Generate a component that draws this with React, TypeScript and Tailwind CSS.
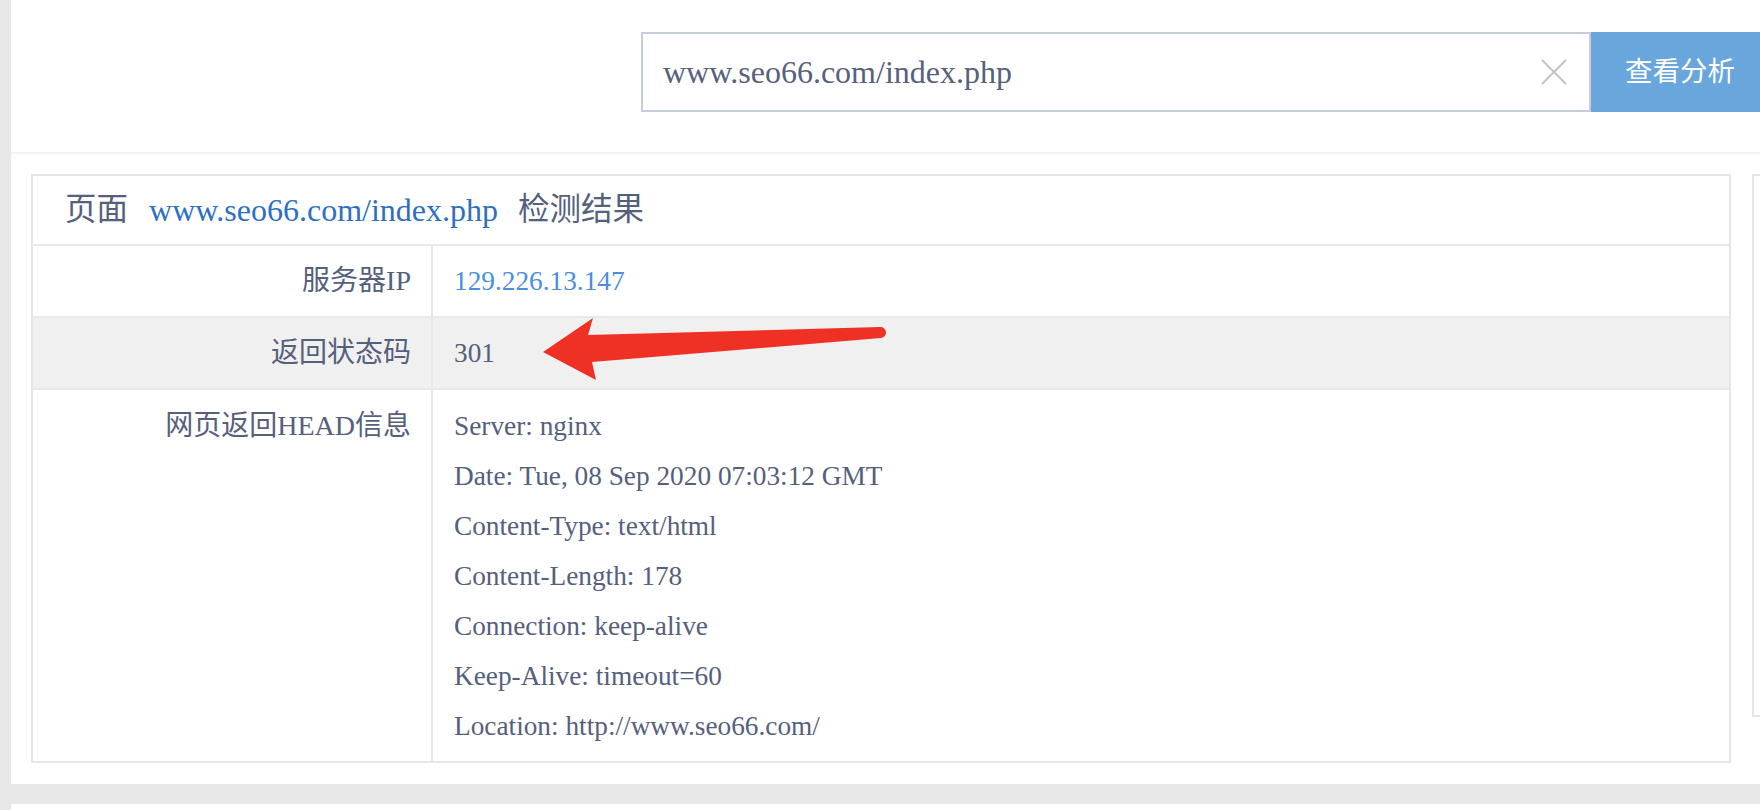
import React from "react";

const serif = { fontFamily: '"Liberation Serif", "Noto Sans CJK SC", serif' };

const headLines = [
  "Server: nginx",
  "Date: Tue, 08 Sep 2020 07:03:12 GMT",
  "Content-Type: text/html",
  "Content-Length: 178",
  "Connection: keep-alive",
  "Keep-Alive: timeout=60",
  "Location: http://www.seo66.com/",
];

function SearchBar() {
  return (
    <div className="flex h-[154px] items-start pt-[32px] pl-[630px] border-b-2 border-[#f2f2f2]">
      <div className="flex h-[80px] w-[950px] shrink-0 items-center border-2 border-[#c6ccda] bg-white pl-[20px] pr-[22px]">
        <span className="flex-1 text-[32px] text-[#56617c]">www.seo66.com/index.php</span>
        <svg width="26" height="26" viewBox="0 0 26 26" className="shrink-0">
          <path d="M1 1 L25 25 M25 1 L1 25" stroke="#c4c4c4" strokeWidth="2" />
        </svg>
      </div>
      <button className="flex h-[80px] w-[190px] shrink-0 items-center bg-[#68a6dc] pl-[34px] text-[27.5px] text-white">
        查看分析
      </button>
    </div>
  );
}

function Row({ label, grey, children }: { label: string; grey?: boolean; children: React.ReactNode }) {
  return (
    <div className={`flex border-b-2 border-[#e8e8e8] ${grey ? "bg-[#f0f0f0]" : ""}`}>
      <div className="flex w-[400px] shrink-0 items-center justify-end border-r-2 border-[#e8e8e8] pr-[20px] text-[28px]">
        {label}
      </div>
      <div className="flex h-[70px] flex-1 items-center pl-[21px] text-[27.3px]">{children}</div>
    </div>
  );
}

function ResultCard() {
  return (
    <div className="w-[1700px] shrink-0 border-2 border-[#e6e6e6] text-[#55607d]">
      <div className="flex h-[70px] items-center border-b-2 border-[#e8e8e8] pl-[32px] text-[31.5px]">
        <span>页面</span>
        <span className="ml-[21px] text-[32px] text-[#2d6fc2]">www.seo66.com/index.php</span>
        <span className="ml-[20px]">检测结果</span>
      </div>
      <Row label="服务器IP">
        <span className="text-[#4a8ee0]">129.226.13.147</span>
      </Row>
      <Row label="返回状态码" grey>
        301
      </Row>
      <div className="flex">
        <div className="w-[400px] shrink-0 border-r-2 border-[#e8e8e8] pr-[20px] pt-[11px] text-right text-[28px] leading-[50px]">
          网页返回HEAD信息
        </div>
        <div className="flex-1 pb-[10px] pl-[21px] pt-[11px] text-[27.3px] leading-[50px]">
          {headLines.map((l) => (
            <div key={l}>{l}</div>
          ))}
        </div>
      </div>
    </div>
  );
}

export default function App() {
  return (
    <div className="relative h-[810px] w-[1760px] overflow-hidden bg-[#e8e8e8] pl-[11px]" style={serif}>
      <div className="bg-white">
        <SearchBar />
        <div className="flex items-start gap-[21px] pl-[20px] pt-[20px] pb-[21px]">
          <ResultCard />
          <div className="h-[543px] w-[200px] shrink-0 border-2 border-[#e6e6e6]" />
        </div>
      </div>
      <div className="mt-[20px] h-[100px] bg-white" />

      <svg
        className="absolute left-[540px] top-[312px]"
        width="352"
        height="72"
        viewBox="0 0 352 72"
      >
        <path
          d="M3 40 L53 6 L48 23 L340 15 A5.5 5.5 0 0 1 341 26 L52 50 L56 68 Z"
          fill="#ee3124"
        />
      </svg>
    </div>
  );
}
